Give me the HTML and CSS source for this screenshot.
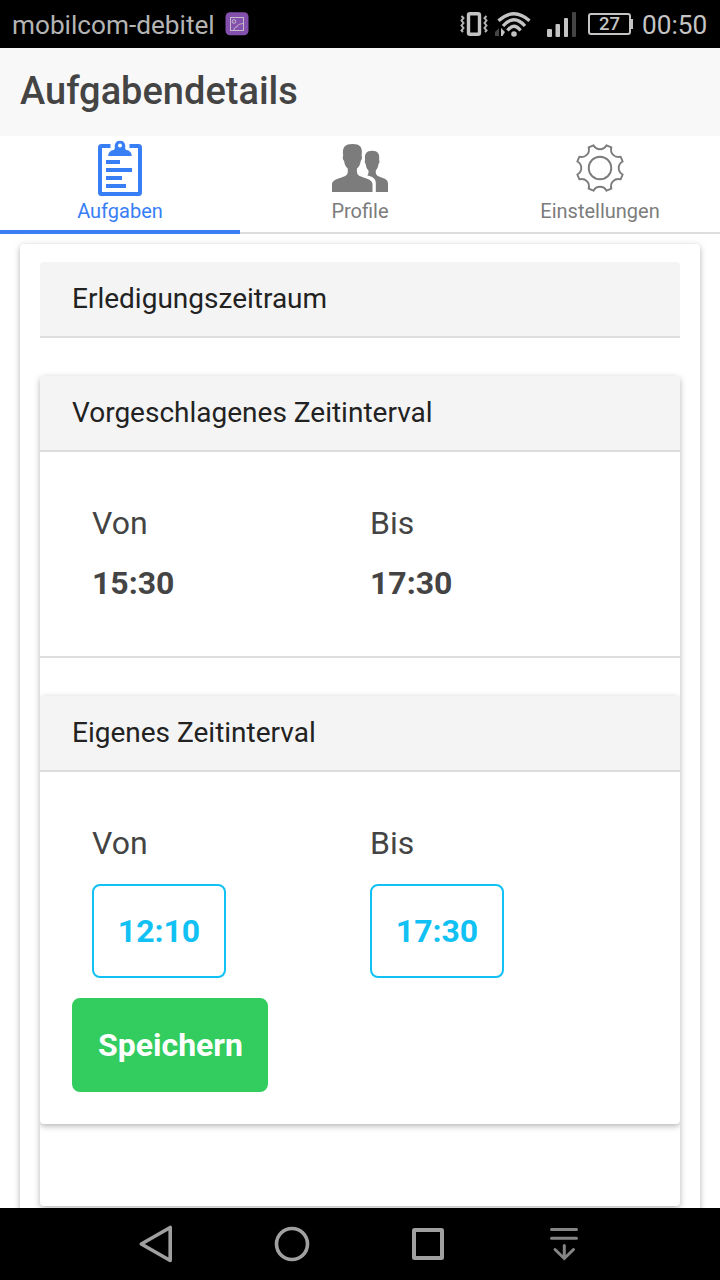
FILE: index.html
```html
<!DOCTYPE html>
<html lang="de">
<head>
<meta charset="utf-8">
<title>Aufgabendetails</title>
<link rel="stylesheet" href="styles.css">
</head>
<body>
<div class="status-bar">
  <span class="carrier">mobilcom-debitel</span>
  <svg class="gallery" width="24" height="24" viewBox="225 12 24 24"><rect x="225.500" y="12.300" width="23" height="23" rx="4.500" fill="#8450ad"/><g fill="none" stroke="#c4bccb" stroke-width="1"><rect x="230.500" y="17.500" width="13" height="13"/><circle cx="234" cy="21.500" r="1.800"/><path d="M234 30c0-2 1-3 3-3 0-2 2-3 6.500-3.500"/></g></svg>
  <svg class="signals" width="122" height="32" viewBox="458 8 122 32">
    <rect x="468.500" y="13.700" width="11" height="20.600" rx="1.500" fill="none" stroke="#c4c4c4" stroke-width="3.400"/>
    <path d="M461.500 16l2 2-2 2.500 2 2.500-2 2.500 2 2.500-2 2.500 1.500 1.500M486.500 16l-2 2 2 2.500-2 2.500 2 2.500-2 2.500 2 2.500-1.500 1.500" fill="none" stroke="#b4b4b4" stroke-width="2"/>
    <g fill="none" stroke="#c4c4c4" stroke-width="3.300"><path d="M498.500 20.800Q514 6.700 529.500 20.800M503 26Q514 13.500 525 26M507.500 30.500Q514 22 520.500 30.500"/></g>
    <circle cx="514" cy="34" r="2.800" fill="#c4c4c4"/>
    <path d="M499 28v8h-4v-4z" fill="#444"/><path d="M501 28v8h1.500l2.500-4z" fill="#c4c4c4"/>
    <g fill="#c4c4c4"><rect x="547" y="29" width="5" height="8" rx="1"/><rect x="555.500" y="24" width="4.500" height="13" rx="1"/><rect x="564" y="18" width="4" height="19" rx="1"/></g><rect x="572" y="12" width="4" height="25" rx="1" fill="#444"/>
  </svg>
  <div class="battery">27</div>
  <span class="clock">00:50</span>
</div>
<header class="header"><h1 class="title">Aufgabendetails</h1></header>
<nav class="tabs">
  <a class="tab tab-active">
    <svg class="tab-icon" width="60" height="60" viewBox="90 138 60 60">
      <path d="M110.500 146H101.500Q100 146 100 147.500V192.500Q100 194 101.500 194H138.500Q140 194 140 192.500V147.500Q140 146 138.500 146H129.500" fill="none" stroke="#387ef5" stroke-width="4"/>
      <path fill="#387ef5" fill-rule="evenodd" d="M108.300 156C108.300 152 111 150.500 113.500 150 115.500 149.300 114.500 146.500 114.800 145A5.300 5.300 0 0 1 125.200 145C125.500 146.500 124.500 149.300 126.500 150 129 150.500 131.700 152 131.700 156ZM118 145.500A2 2 0 0 0 122 145.500 2 2 0 0 0 118 145.500ZM106 160h14v4h-14zM106 168h26v4h-26zM106 176h16v4h-16zM106 184h20v4h-20z"/>
    </svg>
    <span class="tab-label">Aufgaben</span>
  </a>
  <a class="tab">
    <svg class="tab-icon" width="60" height="60" viewBox="330 138 60 60" fill="#7c7c7c">
      <path d="M332 192V184.500C332 180 337 179 344 176.500 348 175 348 173 347.700 168.500 345.500 166.500 344.500 164 344.100 161 342.600 159.500 342.500 157 343.200 155.500 342 147 345 144 352.500 144S363 147 361.600 155.500C362.300 157 362.100 159.500 360.700 161 360.300 164 359.300 166.500 357 168.500 356.700 173 357 175 361 176.500 368 179 372.500 180 372.500 184.500V192Z"/>
      <path d="M375.800 192V183C375.800 178.500 373 177 367.300 175.200 368.500 174 368.700 172.500 368.500 170.500 366.500 168.500 366 166.500 365.700 164 364.500 163 364.500 161 365.100 160 364.300 153.500 366.500 150.800 372.100 150.800S379.900 153.500 379.100 160C379.700 161 379.700 163 378.500 164 378.200 166.500 377.500 168.500 375.800 170.500 375.600 174 376 175 379 176.500 384.500 178.500 388 179.500 388 183.500V192Z"/>
    </svg>
    <span class="tab-label">Profile</span>
  </a>
  <a class="tab">
    <svg class="tab-icon" width="60" height="60" viewBox="-30 -30 60 60" fill="none" stroke="#7c7c7c" stroke-width="1.900">
      <circle r="11.300"/>
      <path stroke-linejoin="round" d="M-6.500-22.700A7.300 7.300 0 0 0 6.500-22.700L11.400-20.600A7.300 7.300 0 0 0 20.600-11.400L22.700-6.500A7.300 7.300 0 0 0 22.700 6.500L20.600 11.400A7.300 7.300 0 0 0 11.400 20.600L6.500 22.700A7.300 7.300 0 0 0-6.500 22.700L-11.400 20.600A7.300 7.300 0 0 0-20.600 11.400L-22.700 6.500A7.300 7.300 0 0 0-22.700-6.500L-20.600-11.400A7.300 7.300 0 0 0-11.400-20.600Z"/>
    </svg>
    <span class="tab-label">Einstellungen</span>
  </a>
</nav>
<main class="content">
  <section class="card card-page">
    <h2 class="divider">Erledigungszeitraum</h2>
    <section class="card card-times">
      <h2 class="divider">Vorgeschlagenes Zeitinterval</h2>
      <div class="interval suggested">
        <div class="col"><span class="label">Von</span><b class="time">15:30</b></div>
        <div class="col"><span class="label">Bis</span><b class="time">17:30</b></div>
      </div>
      <section class="card card-own">
        <h2 class="divider">Eigenes Zeitinterval</h2>
        <div class="interval">
          <div class="col"><span class="label">Von</span><button class="button outline">12:10</button></div>
          <div class="col"><span class="label">Bis</span><button class="button outline">17:30</button></div>
        </div>
        <button class="button save">Speichern</button>
      </section>
    </section>
  </section>
</main>
<footer class="nav-bar">
  <svg width="136" height="72" viewBox="88 1208 136 72"><path d="M141.300 1244L170.200 1227.500V1260.500Z" fill="none" stroke="#a0a0a0" stroke-width="3.600" stroke-linejoin="round"/></svg>
  <svg width="136" height="72" viewBox="224 1208 136 72"><circle cx="292" cy="1244" r="15.500" fill="none" stroke="#a0a0a0" stroke-width="3.600"/></svg>
  <svg width="136" height="72" viewBox="360 1208 136 72"><rect x="414" y="1230" width="28" height="28" rx="0.500" fill="none" stroke="#a0a0a0" stroke-width="4" stroke-linejoin="round"/></svg>
  <svg width="136" height="72" viewBox="496 1208 136 72"><path d="M551.500 1229.500H576.500M551.500 1238.300H576.500M564.300 1245.500V1258M555 1249.500L564.300 1258.500 573.500 1249.500" fill="none" stroke="#858585" stroke-width="3" stroke-linecap="round"/></svg>
</footer>
</body>
</html>
```
FILE: styles.css
```css
* { box-sizing: border-box; }
body {
  margin: 0;
  width: 720px;
  height: 1280px;
  overflow: hidden;
  display: flex;
  flex-direction: column;
  background: #fff;
  color: #444;
  font-family: Roboto, "Liberation Sans", sans-serif;
}
svg { display: block; flex: none; }

.status-bar {
  height: 48px;
  flex: none;
  display: flex;
  align-items: center;
  padding: 0 12px;
  background: #000;
  color: #b4b4b4;
  font-size: 26.200px;
  white-space: nowrap;
}
.carrier { flex: none; width: 213px; padding-top: 2px; }
.signals { margin-left: 209px; }
.battery {
  position: relative;
  flex: none;
  width: 43px;
  height: 22px;
  margin-left: 8px;
  border: 2px solid #c4c4c4;
  border-radius: 3px;
  color: #c4c4c4;
  font-size: 18.500px;
  font-weight: 500;
  line-height: 18px;
  text-align: center;
}
.battery::after {
  content: "";
  position: absolute;
  right: -4px;
  top: 4px;
  width: 2px;
  height: 10px;
  background: #c4c4c4;
}
.clock { margin-left: 11px; padding-top: 2px; color: #c4c4c4; }

.header { height: 88px; flex: none; padding: 0 20px; background: #f8f8f8; }
.title { margin: 0; font-size: 38px; font-weight: 500; line-height: 86px; }

.tabs { height: 98px; flex: none; display: flex; }
.tab {
  flex: 1;
  display: flex;
  flex-direction: column;
  align-items: center;
  padding-top: 2px;
  border-bottom: 2px solid #ddd;
  color: #7c7c7c;
}
.tab-active { border-bottom: 4px solid #387ef5; color: #387ef5; }
.tab-label { font-size: 20px; line-height: 26px; }

.content { flex: 1; min-height: 0; overflow: hidden; padding: 10px 20px 0; }
.card { background: #fff; border-radius: 4px; box-shadow: 0 2px 6px rgba(0, 0, 0, .3); }
.card-page { height: 1100px; padding: 18px 20px 0; }
.card-times { height: 830px; margin-top: 38px; overflow: hidden; }
.card-own { height: 428px; margin-top: 38px; }
.divider {
  height: 76px;
  margin: 0;
  padding: 0 32px;
  border-bottom: 2px solid #ddd;
  border-radius: 4px 4px 0 0;
  background: #f4f4f4;
  color: #222;
  font-size: 28px;
  font-weight: 400;
  line-height: 73px;
}
.interval { display: flex; padding: 51px 52px 20px; }
.suggested { height: 206px; border-bottom: 2px solid #ddd; }
.col { flex: none; width: 278px; display: flex; flex-direction: column; align-items: flex-start; }
.label { height: 60px; font-size: 32px; line-height: 40px; }
.time { font-size: 32px; line-height: 40px; }
.button {
  height: 94px;
  margin: 0;
  padding: 0;
  border: 2px solid;
  border-radius: 8px;
  font-family: inherit;
  font-size: 32px;
  font-weight: 700;
  text-align: center;
}
.outline { width: 134px; margin-top: 1px; border-color: #11c1f3; background: transparent; color: #11c1f3; }
.save { width: 196px; margin-left: 32px; padding-left: 1px; border-color: #33cd5f; background: #33cd5f; color: #fff; }

.nav-bar { height: 72px; flex: none; display: flex; padding-left: 88px; background: #000; }
```
